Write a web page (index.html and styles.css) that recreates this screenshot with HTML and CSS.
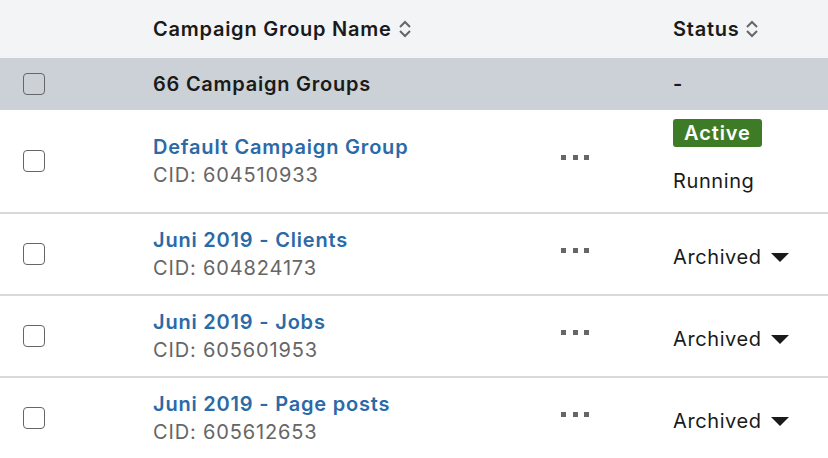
FILE: index.html
```html
<!DOCTYPE html>
<html>
<head>
  <title>Campaign Groups</title>
  <link rel="stylesheet" href="styles.css">
</head>
<body>
  <div class="table">

    <!-- Header -->
    <div class="row head">
      <div class="cell"></div>
      <div class="cell">Campaign Group Name
        <svg class="sort" width="14" height="20" viewBox="0 0 14 20"><path d="M2 8 L7 3 L12 8 M2 12 L7 17 L12 12" fill="none" stroke="#666" stroke-width="2"/></svg>
      </div>
      <div class="cell"></div>
      <div class="cell">Status
        <svg class="sort" width="14" height="20" viewBox="0 0 14 20"><path d="M2 8 L7 3 L12 8 M2 12 L7 17 L12 12" fill="none" stroke="#666" stroke-width="2"/></svg>
      </div>
    </div>

    <!-- Summary -->
    <div class="row summary">
      <div class="cell"><span class="check"></span></div>
      <div class="cell">66 Campaign Groups</div>
      <div class="cell"></div>
      <div class="cell">-</div>
    </div>

    <div class="row item first">
      <div class="cell"><span class="check"></span></div>
      <div class="cell">
        <a class="name">Default Campaign Group</a>
        <div class="cid">CID: 604510933</div>
      </div>
      <div class="cell"><span class="dots"><i></i><i></i><i></i></span></div>
      <div class="cell status">
        <span class="badge">Active</span>
        <div class="running">Running</div>
      </div>
    </div>

    <div class="row item">
      <div class="cell"><span class="check"></span></div>
      <div class="cell">
        <a class="name">Juni 2019 - Clients</a>
        <div class="cid">CID: 604824173</div>
      </div>
      <div class="cell"><span class="dots"><i></i><i></i><i></i></span></div>
      <div class="cell"><span class="archived">Archived <span class="caret"></span></span></div>
    </div>

    <div class="row item">
      <div class="cell"><span class="check"></span></div>
      <div class="cell">
        <a class="name">Juni 2019 - Jobs</a>
        <div class="cid">CID: 605601953</div>
      </div>
      <div class="cell"><span class="dots"><i></i><i></i><i></i></span></div>
      <div class="cell"><span class="archived">Archived <span class="caret"></span></span></div>
    </div>

    <div class="row item">
      <div class="cell"><span class="check"></span></div>
      <div class="cell">
        <a class="name">Juni 2019 - Page posts</a>
        <div class="cid">CID: 605612653</div>
      </div>
      <div class="cell"><span class="dots"><i></i><i></i><i></i></span></div>
      <div class="cell"><span class="archived">Archived <span class="caret"></span></span></div>
    </div>

  </div>
</body>
</html>
```

FILE: styles.css
```css
body {
  margin: 0;
  font-family: Inter, "Noto Sans", sans-serif;
  font-size: 20px;
  letter-spacing: 0.6px;
  color: #1a1a1a;
  background: #fff;
}

.table {
  width: 828px;
}

.row {
  display: grid;
  grid-template-columns: 153px 408px 112px 1fr;
  align-items: center;
}

.cell {
  display: flex;
  align-items: center;
  white-space: nowrap;
}

.row .cell:first-child {
  padding-left: 23px;
}

.head {
  height: 58px;
  background-color: #f3f4f5;
  font-weight: 600;
  letter-spacing: 0.75px;
}

.sort {
  margin-left: 6px;
}

.summary {
  height: 52px;
  background-color: #cbd1d6;
  font-weight: 600;
  letter-spacing: 0.75px;
}

.item {
  height: 80px;
  border-bottom: 2px solid #d9d9d9;
}

.item.first {
  height: 102px;
}

.item:last-child {
  border-bottom: none;
}

.item .cell:nth-child(2) {
  flex-direction: column;
  align-items: flex-start;
}

.check {
  display: block;
  width: 20px;
  height: 20px;
  border: 1.5px solid #666;
  border-radius: 4px;
  background: #fff;
}

.summary .check {
  background: transparent;
}

.name {
  color: #2b6aa6;
  font-weight: 600;
  letter-spacing: 0.8px;
  line-height: 28px;
  cursor: pointer;
}

.cid {
  color: #666;
  letter-spacing: 0.85px;
  line-height: 28px;
}

.dots {
  display: flex;
  gap: 6.5px;
  margin-top: -8px;
}

.dots i {
  display: block;
  width: 5px;
  height: 5px;
  background: #666;
}

.status {
  flex-direction: column;
  align-items: flex-start;
}

.badge {
  display: inline-block;
  background-color: #3e7b27;
  color: #fff;
  font-weight: 600;
  letter-spacing: 0.9px;
  padding: 0 11px;
  height: 28px;
  line-height: 28px;
  border-radius: 3px;
  margin-top: -10px;
}

.running {
  margin-top: 22px;
}

.archived {
  display: flex;
  align-items: center;
  margin-top: 6px;
}

.caret {
  display: inline-block;
  width: 0;
  height: 0;
  margin-left: 9px;
  border-left: 9px solid transparent;
  border-right: 9px solid transparent;
  border-top: 9px solid #1a1a1a;
}
```
